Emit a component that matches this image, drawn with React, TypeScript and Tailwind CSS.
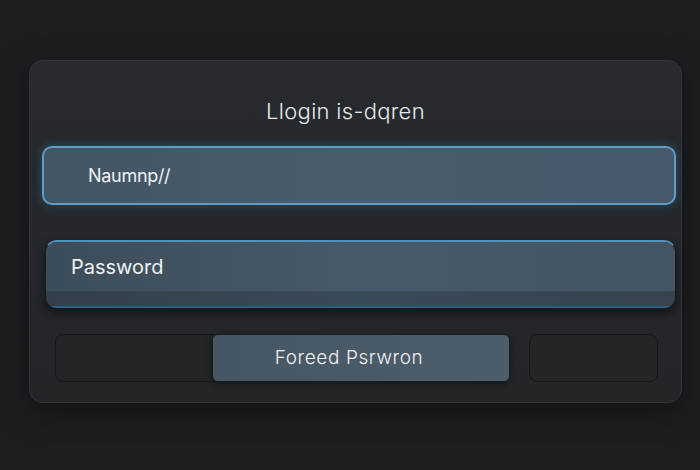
export default function App() {
  return (
    <div className="min-h-[470px] w-[700px] bg-[#1c1f22] pt-[60px] pl-[29px] font-['Inter','Liberation_Sans',sans-serif]">
      <div className="flex w-[653px] flex-col rounded-[14px] border border-[#30353a] bg-gradient-to-b from-[#272b2f] to-[#222629] pb-[20px] shadow-[0_8px_30px_rgba(0,0,0,0.45)]">
        <h1 className="mt-[35px] h-[30px] pr-[20px] text-center text-[22px] font-light leading-[30px] tracking-[0.3px] text-[#e6e9ec]">
          Llogin is-dqren
        </h1>

        <div className="mt-[20px] ml-[12px] mr-[5px] flex h-[59px] items-center rounded-[10px] border-2 border-[#5d9ec4] bg-gradient-to-r from-[#435463] via-[#4b5d6c] to-[#46586a] pl-[44px] shadow-[0_0_10px_rgba(70,150,210,0.35)]">
          <span className="text-[18px] tracking-[-0.3px] text-[#eef1f4]">Naumnp//</span>
        </div>

        <div className="mt-[35px] ml-[15px] mr-[5px] flex h-[69px] flex-col overflow-hidden rounded-[12px] border border-[#1a1d20] border-t-2 border-t-[#4d92bd] shadow-[0_4px_10px_rgba(0,0,0,0.5)]">
          <div className="flex h-[49px] items-center bg-gradient-to-r from-[#3d4c59] via-[#485a69] to-[#445463] pl-[25px]">
            <span className="text-[20px] text-[#eef1f4]">Password</span>
          </div>
          <div className="flex-1 border-b-2 border-b-[#2f5f80] bg-gradient-to-r from-[#33404b] via-[#3b4a57] to-[#374450]" />
        </div>

        <div className="mt-[25px] ml-[25px] mr-[23px] flex h-[48px]">
          <div className="w-[160px] rounded-l-[8px] border border-[#15181a] bg-[#212528]" />
          <button
            type="button"
            className="-ml-[3px] w-[298px] rounded-[6px] border border-[#1a1d20] bg-gradient-to-r from-[#475663] to-[#4d5d6a] pr-[24px] text-[19px] font-light tracking-[0.6px] text-[#eef1f4] shadow-[0_2px_6px_rgba(0,0,0,0.4)]"
          >
            Foreed Psrwron
          </button>
          <div className="ml-[19px] flex-1 rounded-[8px] border border-[#15181a] bg-[#222629]" />
        </div>
      </div>
    </div>
  );
}
